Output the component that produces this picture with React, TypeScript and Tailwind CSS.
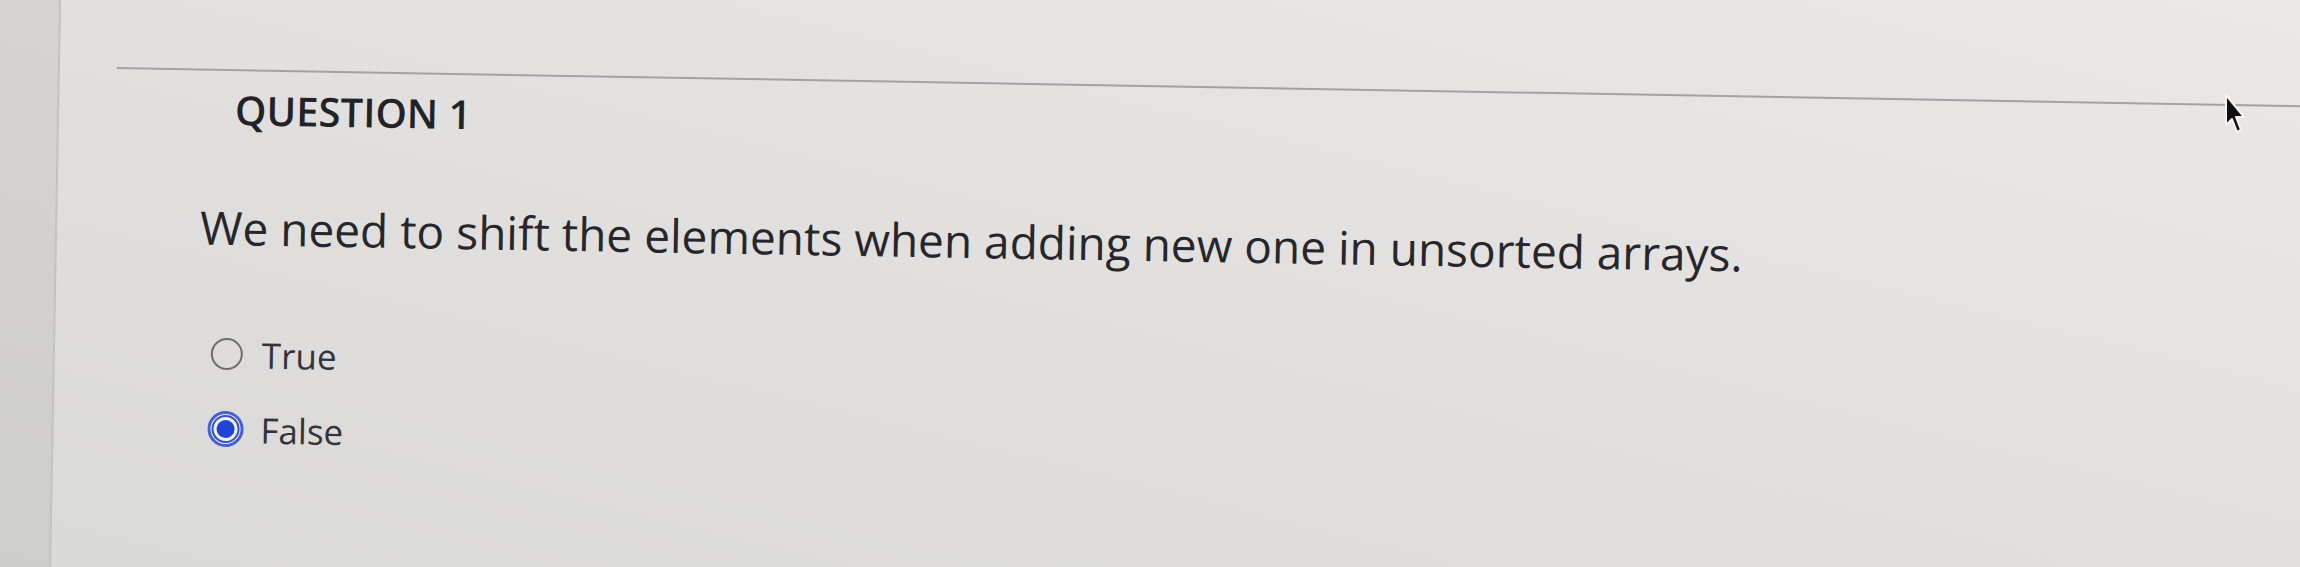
import React from 'react';

type Choice = { label: string; selected: boolean };

const choices: Choice[] = [
  { label: 'True', selected: false },
  { label: 'False', selected: true },
];

function Radio({ selected }: { selected: boolean }) {
  if (selected) {
    return (
      <span className="flex h-[36px] w-[36px] shrink-0 items-center justify-center rounded-full border-[3px] border-[#4560d8] bg-[#eef0f7]">
        <span className="flex h-[28px] w-[28px] items-center justify-center rounded-full border-[2px] border-[#2f4fd2]">
          <span className="h-[18px] w-[18px] rounded-full bg-[#1f45d6]" />
        </span>
      </span>
    );
  }
  return (
    <span className="flex h-[36px] w-[36px] shrink-0 items-center justify-center">
      <span className="h-[32px] w-[32px] rounded-full border-[2.5px] border-[#6e6e70]" />
    </span>
  );
}

function Pointer() {
  return (
    <svg width="26" height="42" viewBox="0 0 26 42" className="absolute left-[2222px] top-[93px]">
      <path
        d="M4 2 L4 32 L10 26 L15 39 L19 37 L14 24 L22 24 Z"
        fill="#111114"
        stroke="#f4f4f4"
        strokeWidth="2"
        strokeLinejoin="round"
      />
    </svg>
  );
}

export default function App() {
  return (
    <div
      className="relative h-[567px] w-[2300px] overflow-hidden bg-linear-to-tr from-[#d9d9d7] via-[#e1e0de] to-[#e9e8e6]"
      style={{ fontFamily: '"Open Sans", "Noto Sans", sans-serif' }}
    >
      <div className="-ml-[100px] -mt-[100px] flex h-[800px] w-[2600px] origin-[100px_100px] rotate-[1deg]">
        <aside className="w-[161px] shrink-0 border-r-2 border-[#c3c3c1] bg-[#0000000d]" />

        <main className="flex-1 pt-[165px]">
          <div className="ml-[57px] border-t-2 border-[#a2a2a4]" />

          <h2 className="mt-[19px] pl-[176px] text-[40px] font-semibold leading-[40px] text-[#232327]">
            QUESTION 1
          </h2>

          <p className="mt-[74px] pl-[143px] text-[46px] leading-[46px] text-[#26262b]">
            We need to shift the elements when adding new one in unsorted arrays.
          </p>

          <div className="mt-[84px] flex flex-col gap-[35px] pl-[154px]">
            {choices.map((c) => (
              <label key={c.label} className="flex h-[40px] items-center gap-[17px]">
                <Radio selected={c.selected} />
                <span className="text-[35px] leading-[35px] text-[#333338]">{c.label}</span>
              </label>
            ))}
          </div>
        </main>
      </div>

      <Pointer />
    </div>
  );
}
